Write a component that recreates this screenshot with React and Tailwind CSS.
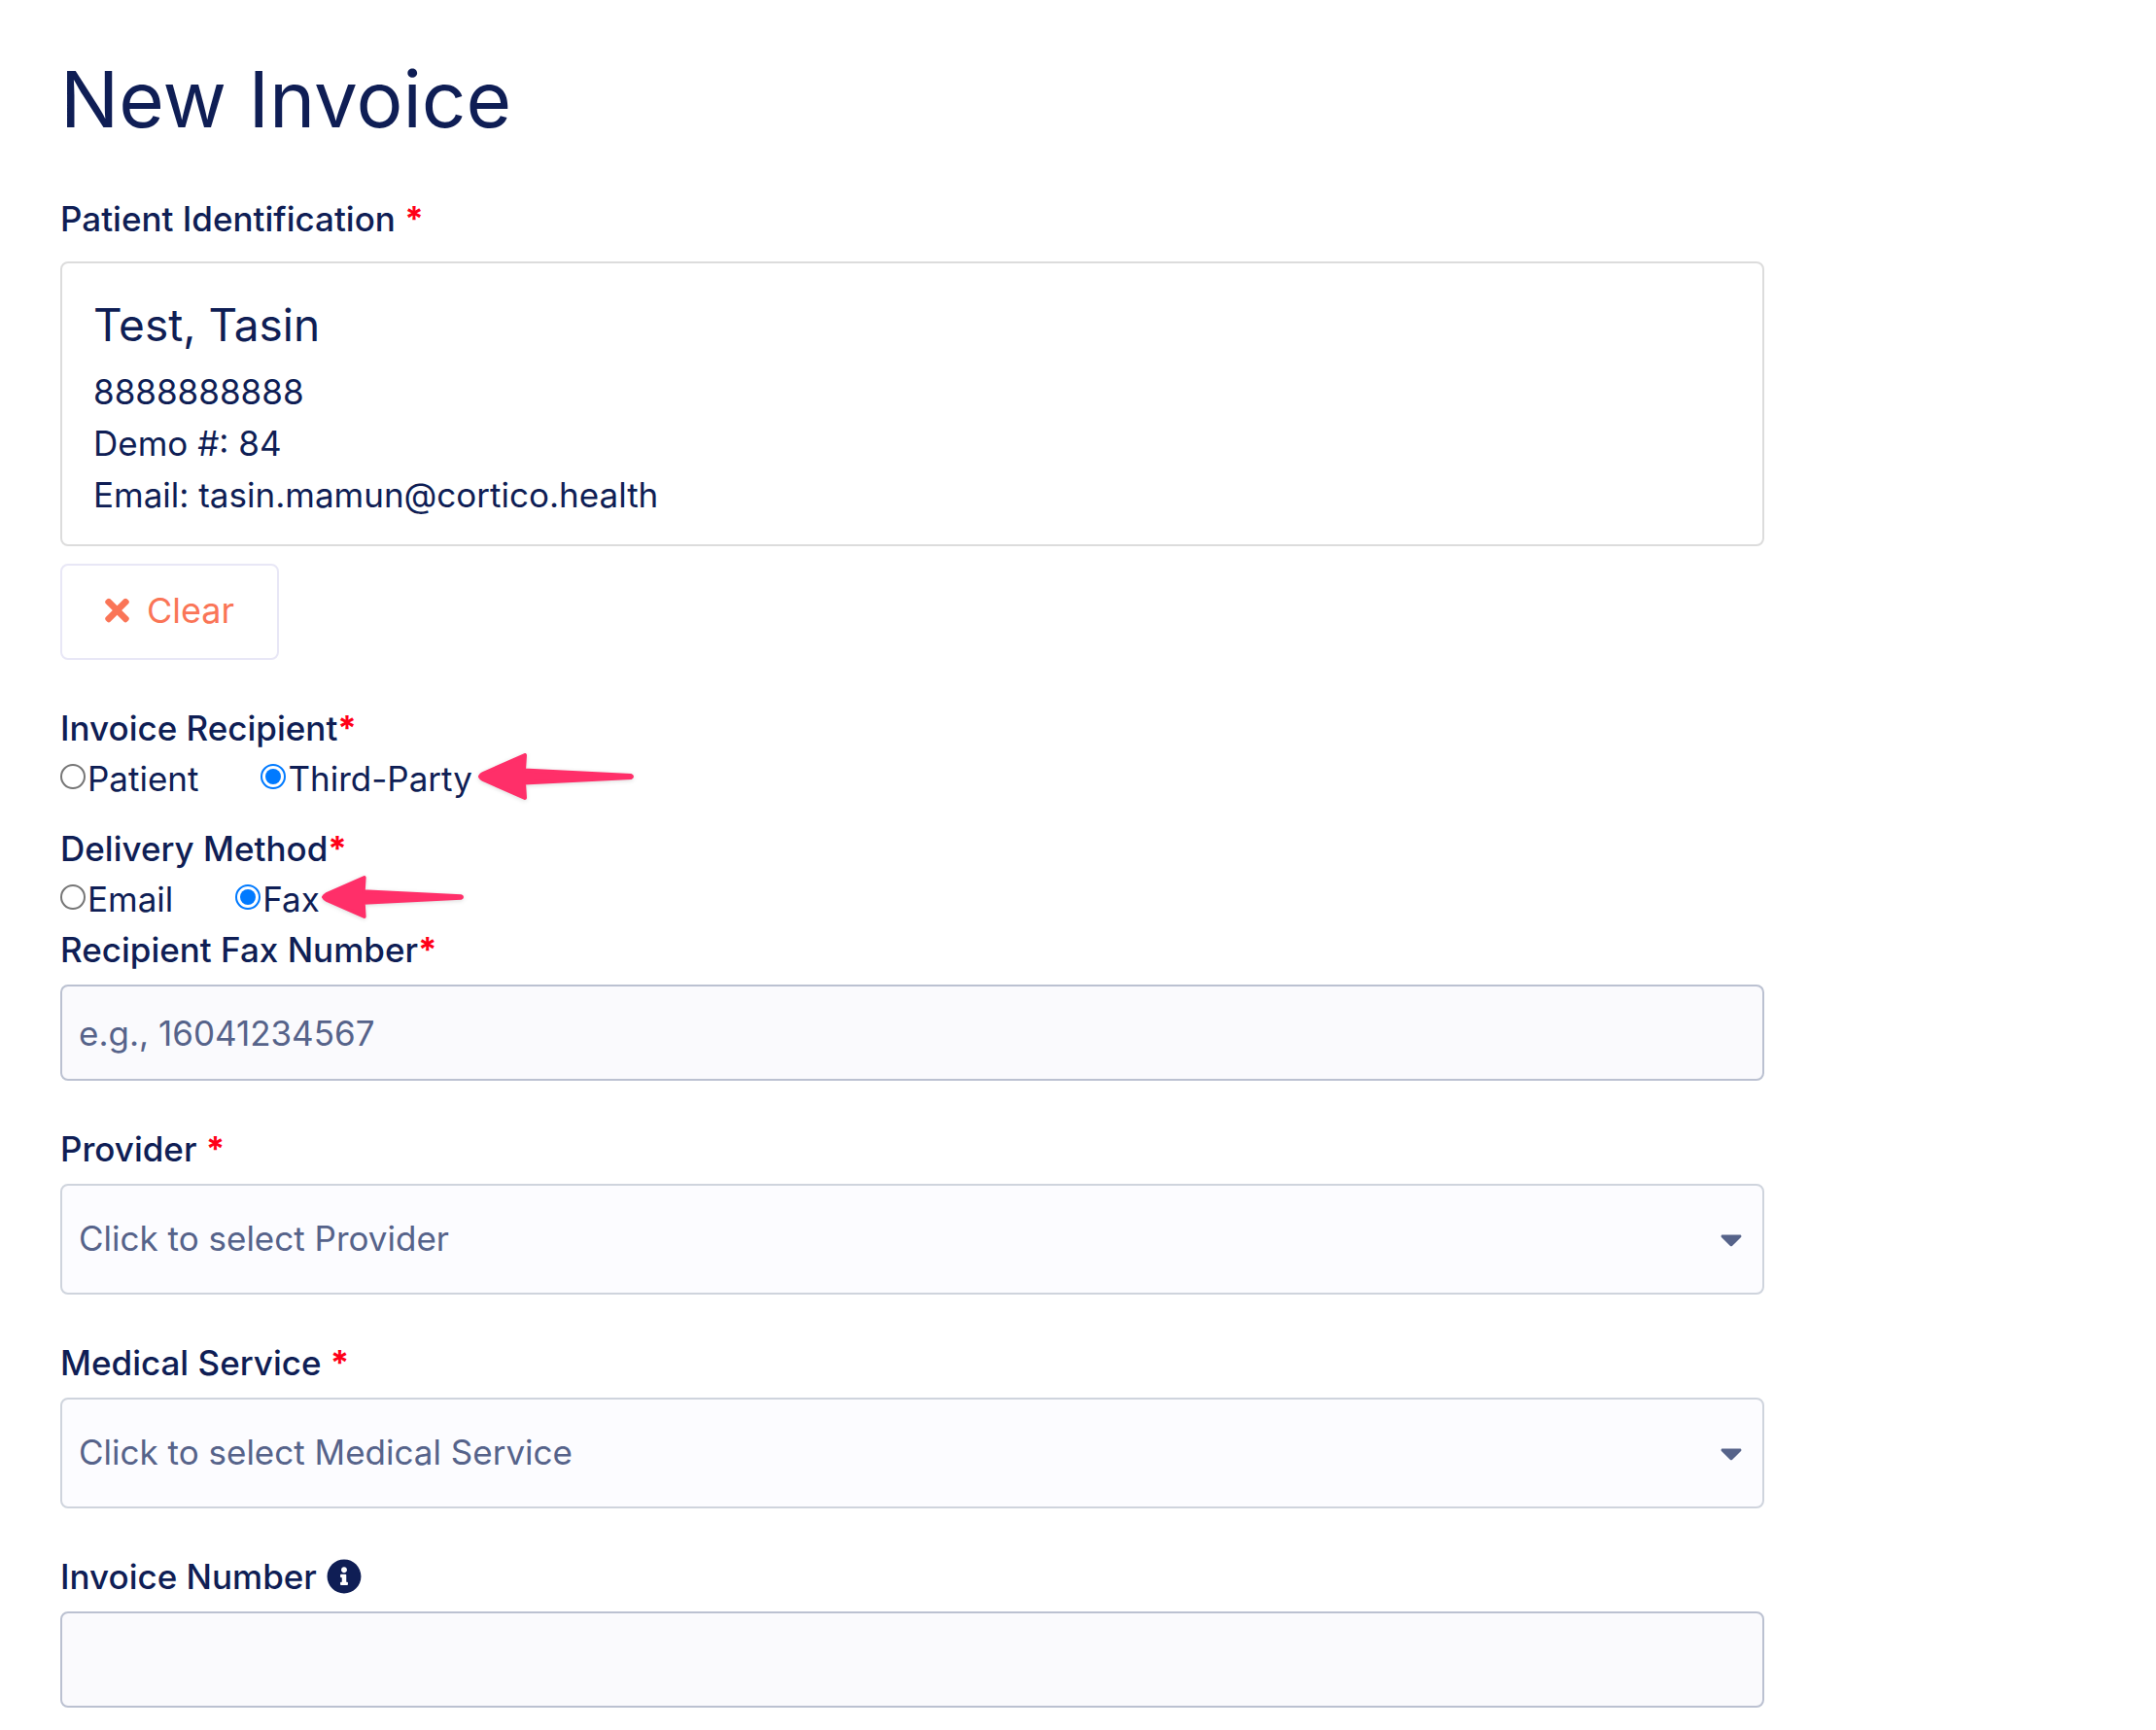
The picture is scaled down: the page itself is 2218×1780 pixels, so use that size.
import { FaCaretDown, FaInfoCircle, FaTimes } from "react-icons/fa";

const box = "w-full rounded-lg border-2 px-[17px] text-[35px] text-[#56638a]";

function Required() {
  return <span className="font-bold text-[#ff0018]">*</span>;
}

function FieldLabel({ htmlFor, children }) {
  return (
    <label htmlFor={htmlFor} className="mb-2.5 flex items-center gap-2.5 text-[35px] leading-[52px] font-medium">
      {children}
    </label>
  );
}

function TextField({ id, label, placeholder }) {
  return (
    <div>
      <FieldLabel htmlFor={id}>{label}</FieldLabel>
      <input
        id={id}
        type="text"
        placeholder={placeholder}
        className={`${box} block h-[99px] border-[#bbc1d1] bg-[#fafafd] placeholder:text-[#56638a]`}
      />
    </div>
  );
}

function SelectField({ id, label, prompt }) {
  return (
    <div>
      <FieldLabel htmlFor={id}>{label}</FieldLabel>
      <div className="relative">
        <select id={id} className={`${box} block h-[114px] appearance-none border-[#cfd4dd] bg-[#fcfcff] pb-0.5`}>
          <option>{prompt}</option>
        </select>
        <FaCaretDown className="pointer-events-none absolute inset-y-0 right-4 my-auto size-9 text-[#56638a]" />
      </div>
    </div>
  );
}

function Arrow({ className }) {
  return (
    <svg
      viewBox="0 0 160 48"
      className={`${className} drop-shadow-sm`}
      fill="#ff2f69"
      stroke="#ff2f69"
      strokeWidth="4"
      strokeLinejoin="round"
      aria-hidden="true"
    >
      <path d="M2 24 Q3 22 5 21 L48 2 L47 17.5 L157 23 Q159 24 157 25 L47 30.5 L48 46 L5 27 Q3 26 2 24 Z" />
    </svg>
  );
}

function RadioGroup({ legend, name, options, selected, arrowClass }) {
  return (
    <fieldset>
      <legend className="text-[35px] leading-[52px] font-medium">
        {legend}
        <Required />
      </legend>
      <div className="flex items-center gap-16 text-[35px] leading-[52px]">
        {options.map((option) => (
          <label key={option} className="relative flex items-center gap-0.5">
            <input
              type="radio"
              name={name}
              defaultChecked={option === selected}
              className="mb-1 size-[26px] appearance-none rounded-full border-2 border-[#767676] bg-white bg-clip-content p-[3px] checked:border-[#007aff] checked:bg-[#007aff]"
            />
            {option}
            {option === selected && <Arrow className={`absolute top-0 bottom-1 left-full my-auto ${arrowClass}`} />}
          </label>
        ))}
      </div>
    </fieldset>
  );
}

export default function App() {
  return (
    <main className="min-h-screen bg-white font-['Inter',sans-serif] text-[#0f1e55]">
      <form className="w-[82%] pt-[52px] pr-1 pb-[23px] pl-[62px]">
        <h1 className="text-[80px] leading-[100px]">New Invoice</h1>

        <section className="mt-[47px]">
          <h2 className="mb-[18px] text-[35px] leading-[52px] font-medium">
            Patient Identification <Required />
          </h2>
          <div className="rounded-lg border-2 border-[#dcdcdc] px-8 pt-[35px] pb-6">
            <h3 className="mb-3.5 text-[46px] leading-[57px]">Test, Tasin</h3>
            <div className="text-[35px] leading-[53px]">
              <p>8888888888</p>
              <p>Demo #: 84</p>
              <p>Email: tasin.mamun@cortico.health</p>
            </div>
          </div>
          <button
            type="button"
            className="mt-[18px] flex h-[99px] items-center gap-[18px] rounded-lg border-2 border-[#e8e7f6] px-11 pb-1 text-4xl text-[#fa7557]"
          >
            <FaTimes className="h-9 w-[25px]" />
            Clear
          </button>
        </section>

        <div className="mt-11 flex flex-col gap-5">
          <RadioGroup
            legend="Invoice Recipient"
            name="recipient"
            options={["Patient", "Third-Party"]}
            selected="Third-Party"
            arrowClass="ml-1.5 h-12 w-40"
          />
          <RadioGroup
            legend="Delivery Method"
            name="delivery"
            options={["Email", "Fax"]}
            selected="Fax"
            arrowClass="ml-0.5 h-11 w-[146px]"
          />
        </div>

        <div className="flex flex-col gap-11">
          <TextField
            id="fax"
            label={
              <span>
                Recipient Fax Number
                <Required />
              </span>
            }
            placeholder="e.g., 16041234567"
          />
          <SelectField
            id="provider"
            label={
              <span>
                Provider <Required />
              </span>
            }
            prompt="Click to select Provider"
          />
          <SelectField
            id="service"
            label={
              <span>
                Medical Service <Required />
              </span>
            }
            prompt="Click to select Medical Service"
          />
          <TextField
            id="number"
            label={
              <>
                Invoice Number <FaInfoCircle className="size-9" />
              </>
            }
          />
        </div>
      </form>
    </main>
  );
}
